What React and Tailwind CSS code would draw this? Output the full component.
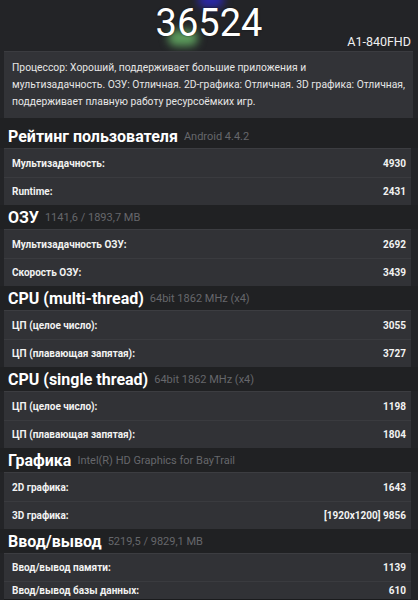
import React from "react";

const sections = [
  {
    title: "Рейтинг пользователя",
    sub: "Android 4.4.2",
    rows: [
      ["Мультизадачность:", "4930"],
      ["Runtime:", "2431"],
    ],
    first: true,
  },
  {
    title: "ОЗУ",
    sub: "1141,6 / 1893,7 MB",
    rows: [
      ["Мультизадачность ОЗУ:", "2692"],
      ["Скорость ОЗУ:", "3439"],
    ],
  },
  {
    title: "CPU (multi-thread)",
    sub: "64bit 1862 MHz (x4)",
    rows: [
      ["ЦП (целое число):", "3055"],
      ["ЦП (плавающая запятая):", "3727"],
    ],
  },
  {
    title: "CPU (single thread)",
    sub: "64bit 1862 MHz (x4)",
    rows: [
      ["ЦП (целое число):", "1198"],
      ["ЦП (плавающая запятая):", "1804"],
    ],
  },
  {
    title: "Графика",
    sub: "Intel(R) HD Graphics for BayTrail",
    rows: [
      ["2D графика:", "1643"],
      ["3D графика:", "[1920x1200] 9856"],
    ],
  },
  {
    title: "Ввод/вывод",
    sub: "5219,5 / 9829,1 MB",
    rows: [
      ["Ввод/вывод памяти:", "1139"],
      ["Ввод/вывод базы данных:", "610"],
    ],
    compact: true,
  },
];

function Section({ s }) {
  const heights = s.compact ? ["h-[27px]", "h-[18px]"] : ["h-[28px]", "h-[28px]"];
  return (
    <div>
      <div className={`${s.first ? "h-[30px] pt-[7px]" : "h-[24px] pt-[1px]"} flex items-center gap-[6px] px-[8px] bg-[#202123]`}>
        <span className="text-[16px] font-bold text-white leading-none">{s.title}</span>
        <span className="text-[11px] text-[#66676b] leading-none">{s.sub}</span>
      </div>
      <div className="ml-[4px] mr-[7px] bg-[#313236] border-t border-[#3c3d41] shadow-[0_1px_0_#1a1b1d]">
        {s.rows.map(([k, v], i) => (
          <div
            key={i}
            className={`${heights[i]} flex items-center justify-between pl-[8px] pr-[5px] text-[10px] font-bold text-[#f2f2f2] ${i > 0 ? "border-t border-[#3a3b3f]" : ""}`}
          >
            <span>{k}</span>
            <span>{v}</span>
          </div>
        ))}
      </div>
    </div>
  );
}

export default function App() {
  return (
    <div
      className="w-[418px] h-[600px] overflow-hidden bg-[#232427] text-white"
      style={{ fontFamily: "Roboto, 'Noto Sans', sans-serif" }}
    >
      <div className="relative h-[51px] grid grid-cols-[1fr_auto_1fr] overflow-hidden">
        <div className="absolute left-[198px] top-[-8px] w-[26px] h-[16px] rounded-full bg-[#2b28a8] blur-[4px]" />
        <div className="absolute left-[168px] top-[30px] w-[30px] h-[16px] rounded-full bg-[#5c9c5c] blur-[4px]" />
        <div />
        <div className="relative pt-[1px] text-[38px] leading-[44px] text-white [text-shadow:0_0_2px_rgba(0,0,0,0.6)]">
          36524
        </div>
        <div className="relative flex items-end justify-end pr-[7px] pb-[2px] text-[12.5px] leading-[14px] text-[#f0f0f0]">
          A1-840FHD
        </div>
      </div>
      <div className="ml-[4px] mr-[5px] h-[67px] bg-[#323337] border-t border-[#3b3c40] px-[8px] pt-[7px] text-[10.3px] leading-[17px] text-[#e6e6e6] whitespace-nowrap">
        Процессор: Хороший, поддерживает большие приложения и
        <br />
        мультизадачность. ОЗУ: Отличная. 2D-графика: Отличная. 3D графика: Отличная,
        <br />
        поддерживает плавную работу ресурсоёмких игр.
      </div>
      {sections.map((s, i) => (
        <Section key={i} s={s} />
      ))}
    </div>
  );
}
